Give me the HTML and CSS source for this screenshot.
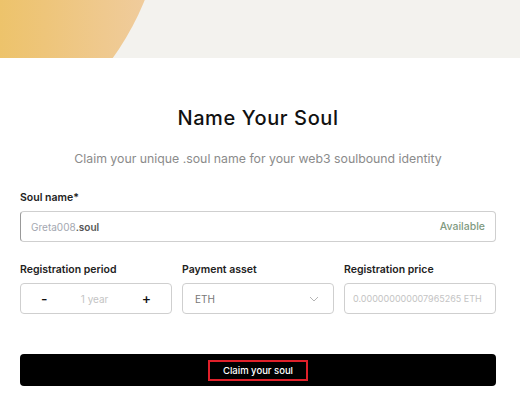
FILE: index.html
```html
<!DOCTYPE html>
<html>
<head>
<meta charset="utf-8">
<link rel="stylesheet" href="styles.css">
</head>
<body>
<div class="banner"><div class="blob"></div></div>
<main class="content">
  <h1 class="title">Name Your Soul</h1>
  <p class="subtitle">Claim your unique .soul name for your web3 soulbound identity</p>
  <div class="field">
    <div class="label">Soul name*</div>
    <div class="input name-input">
      <span><span class="ph">Greta008</span><span class="suffix">.soul</span></span>
      <span class="avail">Available</span>
    </div>
  </div>
  <div class="row">
    <div class="field">
      <div class="label">Registration period</div>
      <div class="input stepper">
        <span class="step">-</span>
        <span class="ph light">1 year</span>
        <span class="step">+</span>
      </div>
    </div>
    <div class="field">
      <div class="label">Payment asset</div>
      <div class="input select">
        <span class="val">ETH</span>
        <svg width="10" height="6" viewBox="0 0 10 6"><path d="M1 1l4 4 4-4" fill="none" stroke="#b5b5b5" stroke-width="1"/></svg>
      </div>
    </div>
    <div class="field">
      <div class="label">Registration price</div>
      <div class="input price"><span class="ph light">0.000000000007965265 ETH</span></div>
    </div>
  </div>
  <button class="cta"><span class="cta-text">Claim your soul</span></button>
</main>
</body>
</html>
```
FILE: styles.css
```css
* { box-sizing: border-box; }
body { margin: 0; background: #fff; font-family: Inter, "Noto Sans", sans-serif; color: #111; }
.banner { position: relative; height: 58px; background: #f3f2ee; overflow: hidden; }
.blob { position: absolute; left: -374px; top: -369px; width: 538px; height: 538px; border-radius: 50%;
  background: linear-gradient(90deg, #ebbf4f 0%, #ecc15a 60%, #eec57a 78%, #f0cda3 100%); }
.content { padding: 0 24px 0 20px; }
.title { margin: 48px 0 0; text-align: center; font-size: 20px; font-weight: 500; letter-spacing: 0.6px; line-height: 24px; }
.subtitle { margin: 20px 0 0; text-align: center; font-size: 12.3px; color: #8b8b8b; line-height: 18px; }
.field { display: flex; flex-direction: column; }
.label { font-size: 10.5px; font-weight: 600; color: #222; line-height: 14px; }
.content > .field { margin-top: 23px; }
.input { margin-top: 6px; height: 31px; border: 1px solid #cfcfcf; border-radius: 4px; display: flex; align-items: center; padding: 0 10px; font-size: 10px; white-space: nowrap; }
.name-input { justify-content: space-between; border-left-color: #999; }
.ph { color: #a3a7b0; }
.ph.light { color: #c4c4c4; }
.suffix { color: #555; font-weight: 600; }
.avail { color: #7f9a7f; font-weight: 500; font-size: 10.5px; }
.row { display: grid; grid-template-columns: repeat(3, 1fr); gap: 10px; margin-top: 21px; }
.row .input { height: 31px; }
.stepper { justify-content: space-between; padding: 0 20px; }
.step { font-size: 14px; color: #111; font-weight: 500; }
.select { justify-content: space-between; padding: 0 14px 0 12px; }
.val { color: #777; }
.price { padding: 0 8px; font-size: 9px; overflow: hidden; }
.cta { margin-top: 40px; width: 100%; height: 32px; background: #000; border: none; border-radius: 4px; display: flex; align-items: center; justify-content: center; padding: 0; cursor: pointer; }
.cta-text { color: #fff; font-family: Inter, sans-serif; font-size: 9.5px; font-weight: 500; border: 2px solid #e0202a; width: 100px; height: 21px; display: flex; align-items: center; justify-content: center; }
```
